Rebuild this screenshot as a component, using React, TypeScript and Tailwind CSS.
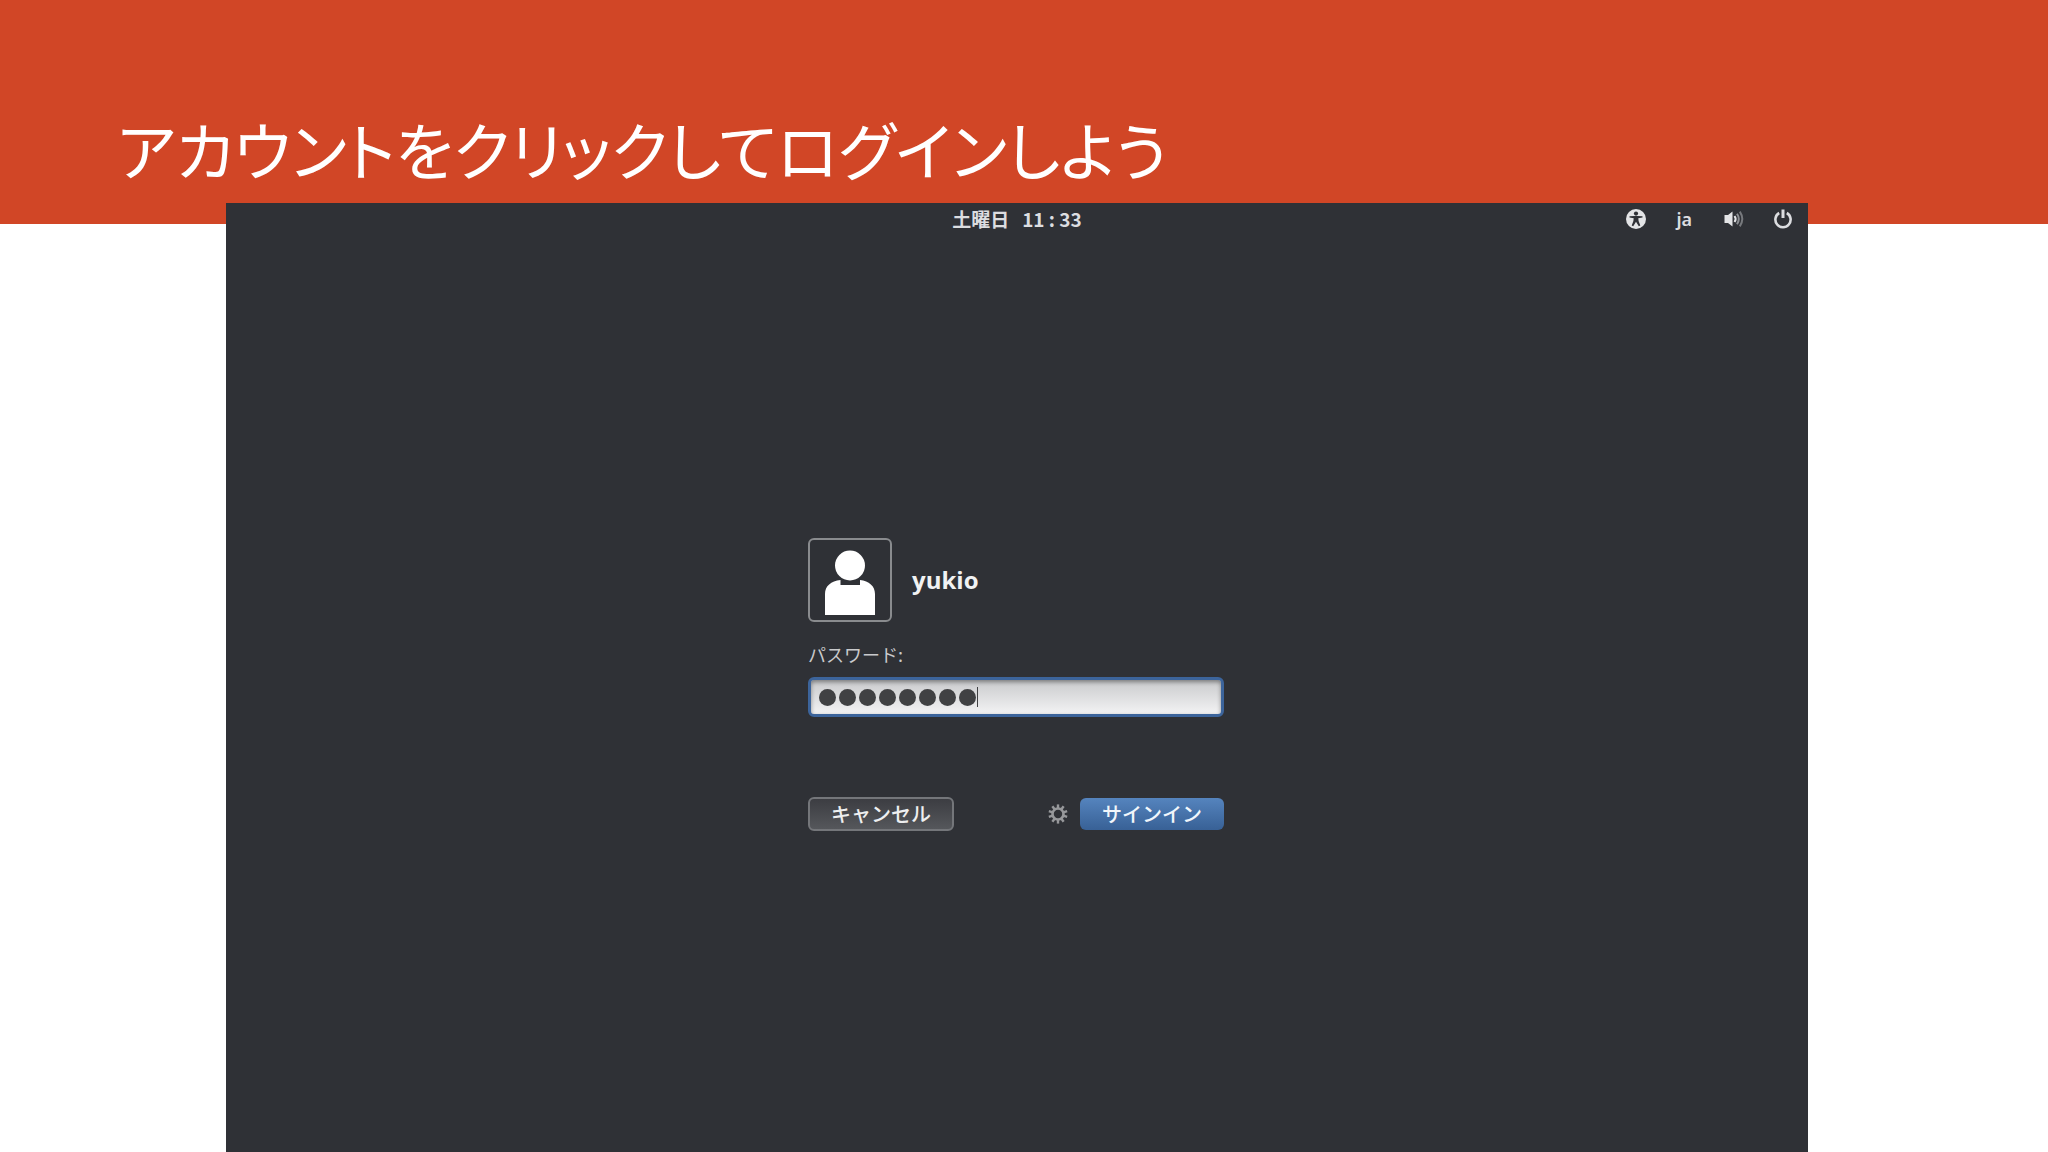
import { useState } from "react";

function AccessibilityIcon() {
  return (
    <svg viewBox="0 0 20 20" className="size-5" aria-hidden="true">
      <circle cx="10" cy="10" r="10" fill="#e3e4e6" />
      <circle cx="10" cy="4.6" r="2.1" fill="#2f3136" />
      <path
        d="M3.5 7.2 L8.2 7 H11.8 L16.5 7.2 V8.6 L12.3 9.2 L12.6 12 L14.3 16.6 L12.8 17.2 L10 12.8 L7.2 17.2 L5.7 16.6 L7.4 12 L7.7 9.2 L3.5 8.6 Z"
        fill="#2f3136"
      />
    </svg>
  );
}

function VolumeIcon() {
  return (
    <svg viewBox="0 0 20 18" className="h-[18px] w-5" fill="none" aria-hidden="true">
      <path d="M0.5 5 H4 L8.5 1.5 V16.5 L4 13 H0.5 Z" fill="#e3e4e6" />
      <path d="M10.5 6 Q12.8 9 10.5 12" stroke="#e3e4e6" strokeWidth="2" />
      <path d="M13 3.8 Q16.6 9 13 14.2" stroke="#8d8f93" strokeWidth="2" />
      <path d="M15.8 1.6 Q20.8 9 15.8 16.4" stroke="#77797d" strokeWidth="2" />
    </svg>
  );
}

function PowerIcon() {
  return (
    <svg viewBox="0 0 18 20" className="h-5 w-[18px]" fill="none" stroke="#dcdde0" aria-hidden="true">
      <path d="M5.2 4 A7.6 7.6 0 1 0 12.8 4" strokeWidth="2.6" />
      <path d="M9 0.5 V9" strokeWidth="3" />
    </svg>
  );
}

function UserIcon() {
  return (
    <svg viewBox="0 0 50 66" className="h-[66px] w-[50px]" fill="#ffffff" aria-hidden="true">
      <circle cx="25" cy="15.5" r="15" />
      <path d="M0 65 V44 C0 36 6 31 15.5 30 V35 H35 V30 C44 31 50 36 50 44 V65 Z" />
    </svg>
  );
}

function GearIcon() {
  const teeth = [0, 36, 72, 108, 144, 180, 216, 252, 288, 324];
  return (
    <svg viewBox="0 0 20 20" className="size-5" fill="none" stroke="#97989b" aria-hidden="true">
      <circle cx="10" cy="10" r="5.5" strokeWidth="2.6" />
      {teeth.map((angle) => (
        <path key={angle} d="M10 4.5 V0.4" strokeWidth="2.4" transform={`rotate(${angle} 10 10)`} />
      ))}
    </svg>
  );
}

function TopBar() {
  return (
    <header className="grid h-8 grid-cols-3 items-center px-4 text-[#dcdde0]">
      <span />
      <time className="text-center text-[19px] leading-8 font-bold whitespace-pre">土曜日&nbsp;&nbsp; 11 : 33</time>
      <div className="flex items-center justify-end">
        <button type="button" aria-label="アクセシビリティ">
          <AccessibilityIcon />
        </button>
        <button type="button" className="ml-[30px] font-['Noto_Sans'] text-lg leading-8 font-semibold">
          ja
        </button>
        <button type="button" aria-label="音量" className="ml-8">
          <VolumeIcon />
        </button>
        <button type="button" aria-label="電源" className="ml-[30px]">
          <PowerIcon />
        </button>
      </div>
    </header>
  );
}

function PasswordField() {
  const [password, setPassword] = useState("password");
  return (
    <div className="relative">
      <input
        id="password"
        type="password"
        value={password}
        onChange={(event) => setPassword(event.target.value)}
        className="block h-10 w-full rounded-md border-[3px] border-[#3c649b] bg-linear-to-b from-[#c9cacc] to-[#f3f3f4] px-2 text-xl text-transparent shadow-[inset_0_2px_4px_#00000066] outline-none"
      />
      <div className="pointer-events-none absolute inset-0 flex items-center gap-[3px] px-[11px]" aria-hidden="true">
        {Array.from(password, (_, index) => (
          <span key={index} className="size-[17px] rounded-full bg-[#404143]" />
        ))}
        <span className="-ml-0.5 h-5 w-px bg-[#404143]" />
      </div>
    </div>
  );
}

function LoginForm() {
  return (
    <form className="mx-auto mt-[303px] w-[418px] pr-0.5" onSubmit={(event) => event.preventDefault()}>
      <div className="flex items-center gap-5">
        <div className="flex size-[84px] items-end justify-center rounded-md border-2 border-[#898b8e] pb-1">
          <UserIcon />
        </div>
        <span className="font-['Open_Sans'] text-2xl leading-8 font-bold text-[#f1f2f3]">yukio</span>
      </div>
      <label htmlFor="password" className="mt-4 mb-[7px] block text-lg leading-8 text-[#c9cacc]">
        パスワード:
      </label>
      <PasswordField />
      <div className="mt-20 flex items-center">
        <button
          type="button"
          className="h-[34px] w-[146px] rounded-md border-2 border-[#74767a] bg-linear-to-b from-[#3c3d42] to-[#55575b] text-xl leading-7 font-medium text-[#eeeff0]"
        >
          キャンセル
        </button>
        <button type="button" aria-label="セッション" className="ml-auto">
          <GearIcon />
        </button>
        <button
          type="submit"
          className="ml-3 h-8 w-36 rounded-md bg-linear-to-b from-[#5584be] to-[#386196] text-xl leading-7 font-medium text-[#f1f6fb]"
        >
          サインイン
        </button>
      </div>
    </form>
  );
}

export default function App() {
  return (
    <div className="flex h-screen flex-col overflow-hidden bg-white font-['Noto_Sans_CJK_JP',sans-serif]">
      <div className="h-56 shrink-0 bg-[#d14626] px-[117px] pt-[98px]">
        <h1 className="text-[63px] leading-[100px] whitespace-nowrap text-white [font-feature-settings:'palt']">
          アカウントをクリックしてログインしよう
        </h1>
      </div>
      <main className="relative -mt-[21px] mr-60 ml-[226px] grow bg-[#2f3136]">
        <TopBar />
        <LoginForm />
      </main>
    </div>
  );
}
